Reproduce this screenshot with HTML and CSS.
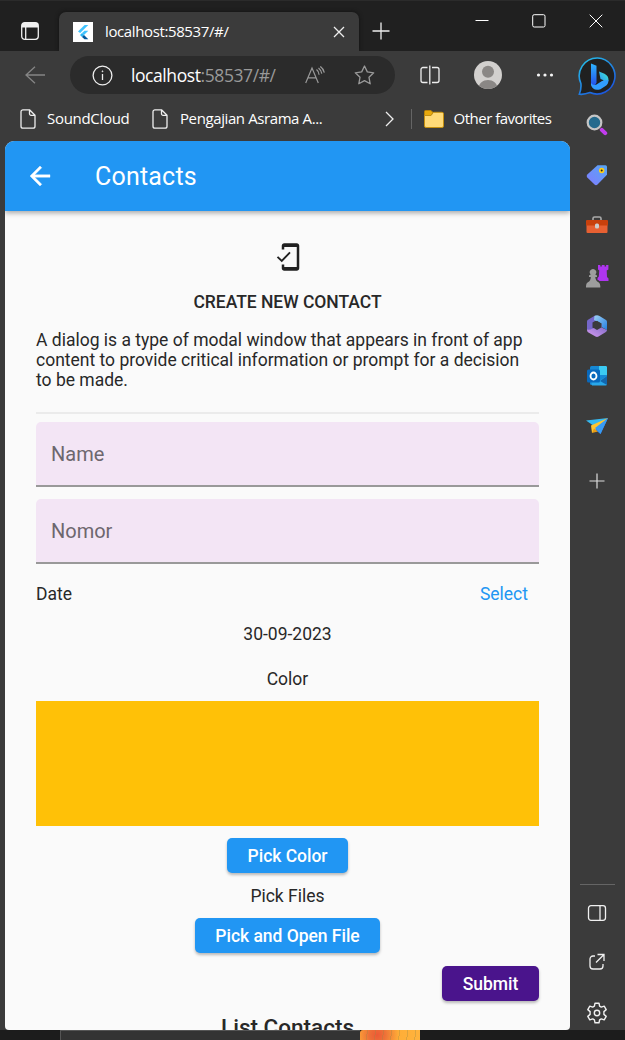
FILE: index.html
```html
<!DOCTYPE html>
<html lang="en">
<head>
<meta charset="utf-8">
<title>Contacts</title>
<link rel="stylesheet" href="styles.css">
</head>
<body>
<div class="window">
  <header class="titlebar">
    <svg class="workspaces" width="18" height="18" fill="none" stroke="#f0f0f0" stroke-width="1.3"><rect x=".7" y=".7" width="16.6" height="16.6" rx="3"/><path d="M1 2.500h16M1 4h16" stroke-width="3"/><path d="M4.700 5v12"/></svg>
    <div class="tab">
      <svg class="favicon" width="20" height="20"><path fill="#fff" d="M0 0h20v20H0z"/><path fill="#40c4ff" d="M11.600 3h3.700L7.200 11 5 9.500z"/><path fill="#40c4ff" d="M11.500 8.800h3.800L11 13l-2-2z"/><path fill="#29b6f6" d="M7 13l2-2 2.200 2L9 15z"/><path fill="#01579b" d="M9 15l2-2 4.300 4.200h-3.800z"/></svg>
      <span class="tab-title">localhost:58537/#/</span>
      <svg class="tab-close" width="12" height="12" stroke="#eee" stroke-width="1.3"><path d="M1 1l10 10M11 1L1 11"/></svg>
    </div>
    <svg class="new-tab" width="18" height="18" stroke="#eee" stroke-width="1.3"><path d="M9 .5v17M.5 9h17"/></svg>
    <div class="controls">
      <svg width="14" height="14" stroke="#fff"><path d="M.5 6.500h13"/></svg>
      <svg width="14" height="14" stroke="#fff" fill="none"><rect x=".7" y=".7" width="12.300" height="12.300" rx="1.500"/></svg>
      <svg width="14" height="14" stroke="#fff"><path d="M.7.7l12.600 12.600M13.300.7L.7 13.300"/></svg>
    </div>
  </header>
  <div class="body">
    <div class="main">
      <nav class="toolbar">
        <svg class="back" width="21" height="18" fill="none" stroke="#858585" stroke-width="1.3"><path d="M20 9H1M10 .7L1 9l9 8.300"/></svg>
        <div class="address">
          <svg width="21" height="21" fill="none" stroke="#eee" stroke-width="1.3"><circle cx="10.500" cy="10.500" r="9.400"/><path d="M10.500 9v6"/><circle cx="10.500" cy="6.300" r=".5" fill="#eee" stroke-width=".8"/></svg>
          <span class="url">localhost<span class="url-rest">:58537/#/</span></span>
          <svg class="read" width="21" height="18" fill="none" stroke="#999" stroke-width="1.2"><path d="M.7 17L7 2l6.300 15M3 11.800h8M11.500 3.500q2.500 2 2.600 5.200M13.500 2q2.700 2.200 3.300 5.600M15.300.4q3 2 4 6.200"/></svg>
          <svg class="star" width="21" height="20" fill="none" stroke="#999" stroke-width="1.3" stroke-linejoin="round"><path d="M10.500 1l2.800 5.900 6.400.9-4.700 4.500 1.200 6.500-5.700-3.200-5.700 3.200L6 12.300 1.300 7.800l6.400-.9z"/></svg>
        </div>
        <svg class="split" width="20" height="20" fill="none" stroke="#eee" stroke-width="1.3"><path d="M7.500 2.500H3a2 2 0 0 0-2 2v11a2 2 0 0 0 2 2h4.500M12 2.500h5a2 2 0 0 1 2 2v11a2 2 0 0 1-2 2h-5M9.800.5v19"/></svg>
        <svg class="avatar" width="28" height="28" viewBox="0 0 28 28"><defs><clipPath id="disc"><circle cx="14" cy="14" r="14"/></clipPath></defs><g clip-path="url(#disc)"><path fill="#d2d0ce" d="M0 0h28v28H0z"/><g fill="#8a8785"><circle cx="14" cy="10.800" r="6"/><path d="M4.500 28c0-12 19-12 19 0z"/></g></g></svg>
        <svg class="more" width="18" height="4" fill="#f5f5f5"><circle cx="2.500" cy="2" r="1.600"/><circle cx="9" cy="2" r="1.600"/><circle cx="15.500" cy="2" r="1.600"/></svg>
      </nav>
      <nav class="favorites">
        <svg class="doc" width="16" height="20" fill="none" stroke="#eee" stroke-width="1.300" stroke-linejoin="round"><path d="M9.500.8H3a2 2 0 0 0-2 2v14.400a2 2 0 0 0 2 2h10a2 2 0 0 0 2-2V6.300zM9.500.8v4a1.500 1.500 0 0 0 1.500 1.500h4"/></svg>
        <span class="fav-one">SoundCloud</span>
        <svg class="doc" width="16" height="20" fill="none" stroke="#eee" stroke-width="1.300" stroke-linejoin="round"><path d="M9.500.8H3a2 2 0 0 0-2 2v14.400a2 2 0 0 0 2 2h10a2 2 0 0 0 2-2V6.300zM9.500.8v4a1.500 1.500 0 0 0 1.500 1.500h4"/></svg>
        <span class="fav-two">Pengajian Asrama A...</span>
        <svg class="chevron" width="9" height="16" fill="none" stroke="#eee" stroke-width="1.300"><path d="M1 1l7 7-7 7"/></svg>
        <i class="fav-line"></i>
        <svg class="folder" width="20" height="18"><path fill="#e8a90c" stroke="#b98209" d="M.5 1.500q0-1 1-1h5.500l2 2-2 3H.5z"/><path fill="#ffda78" stroke="#c48f10" d="M.5 5.500H7l2.500-3.200H18q1.500 0 1.500 1.500V16q0 1.500-1.500 1.500H2Q.5 17.500.5 16z"/></svg>
        <span class="fav-other">Other favorites</span>
      </nav>
      <main class="page">
        <div class="appbar">
          <svg width="30" height="30" viewBox="0 0 24 24" fill="#fff" stroke="#fff" stroke-width=".3"><path d="M20 11H7.830l5.590-5.590L12 4l-8 8 8 8 1.410-1.410L7.830 13H20v-2z"/></svg>
          <h1>Contacts</h1>
        </div>
        <div class="form">
          <svg class="phone" width="30" height="30" viewBox="0 0 24 24" fill="#212121"><path d="M19 1H9c-1.100 0-2 .9-2 2v3h2V4h10v16H9v-2H7v3c0 1.100.9 2 2 2h10c1.100 0 2-.9 2-2V3c0-1.100-.9-2-2-2z"/><path d="M3.600 11.900L7 15.200l6.600-6.900" fill="none" stroke="#212121" stroke-width="1.500"/></svg>
          <h2>CREATE NEW CONTACT</h2>
          <p class="intro">A dialog is a type of modal window that appears in front of app<br>content to provide critical information or prompt for a decision<br>to be made.</p>
          <div class="rule"></div>
          <div class="field">Name</div>
          <div class="field">Nomor</div>
          <div class="date-row"><span>Date</span><span class="select">Select</span></div>
          <div class="date">30-09-2023</div>
          <div class="label">Color</div>
          <div class="swatch"></div>
          <button class="pick-color">Pick Color</button>
          <div class="files">Pick Files</div>
          <button class="pick-file">Pick and Open File</button>
          <button class="submit">Submit</button>
          <h3>List Contacts</h3>
        </div>
      </main>
    </div>
    <aside class="sidebar">
      <svg class="bing" width="40" height="40" viewBox="0 0 40 40"><defs><linearGradient id="ring" x1="0" y1="0" x2=".7" y2="1"><stop offset="0" stop-color="#26c6ea"/><stop offset="1" stop-color="#1c55dc"/></linearGradient><linearGradient id="bl" x2="0" y2="1"><stop stop-color="#2eb4ff"/><stop offset="1" stop-color="#2347e8"/></linearGradient><linearGradient id="br" x1="1" x2="0" y2="1"><stop stop-color="#42e8ca"/><stop offset="1" stop-color="#288cff"/></linearGradient></defs><path fill="#202020" stroke="url(#ring)" stroke-width="1.600" d="M20.500 2a18 18 0 1 1-7.500 34.600Q7 38.800 2.300 38.200Q4.500 33 3.900 27.500A18 18 0 0 1 20.500 2z"/><path fill="url(#bl)" d="M14 7.500l5.500 2.300v16.700l-2.500 5q-3-1.300-3-3.500z"/><path fill="url(#br)" d="M22 15.500l5.500 2.300q4 2 4 6.200l-1.500 4-4.500-4.200-2-.8z"/><path fill="#319dff" d="M14 27q2 3 5.500 1.500l5.500-3.500q5-1.200 6.500-1 0 4-3 6l-5 3.200Q16 35.500 14 29z"/></svg>
      <svg width="22" height="22"><circle cx="8.500" cy="8.500" r="6.800" fill="#246a8d" stroke="#c5c5c5" stroke-width="2.200"/><path d="M15.800 15.800l3.400 3.400" stroke="#c23cee" stroke-width="4" stroke-linecap="round"/></svg>
      <svg width="22" height="22"><defs><linearGradient id="tag" x1="1" x2="0" y2="1"><stop stop-color="#55a7f4"/><stop offset="1" stop-color="#817cff"/></linearGradient></defs><path fill="url(#tag)" d="M11.500 1.200h8q1.500 0 1.500 1.500v8L11.500 20.500q-1.500 1.300-3 0L1.300 13.500q-1.300-1.500 0-3z"/><circle cx="15.700" cy="6.500" r="2.700" fill="#ffcf15"/><circle cx="15.700" cy="6.500" r="1" fill="#222"/></svg>
      <svg width="24" height="22"><path fill="none" stroke="#aaa" stroke-width="1.600" d="M8 7V4.500Q8 3 9.500 3h5Q16 3 16 4.500V7"/><rect x="1.500" y="7" width="21" height="12" rx="1" fill="#e76032"/><path fill="#c8400c" d="M1 7q0-1 1-1h20q1 0 1 1v4.500H1z"/><rect x="10" y="9.500" width="4" height="5" rx="1.500" fill="#ccc"/></svg>
      <svg width="24" height="24"><path fill="#9d9d9d" d="M5.700 10.500a3.200 3.200 0 1 1 4.600 0l1.700 1v1.500h-1.700q.2 4 3.200 5.300 1.800.9 1.800 3.700v1.500H1V22q0-2.800 1.800-3.700 3-1.300 3-5.300H4v-1.500z"/><path fill="#ae35ef" d="M13 1h2.300v1.500h1.500V1h2.800v1.500h1.500V1H23.400v4.500l-1.700 1 .3 6.500 1.500 1.500V17H14.500q-.8-.8-2-1.300V14l1.300-1.500.5-6L13 5.500z"/></svg>
      <svg width="22" height="24"><defs><linearGradient id="m1" x2="1" y2="1"><stop stop-color="#a1d2f3"/><stop offset="1" stop-color="#227ee2"/></linearGradient><linearGradient id="m2" y1="1" x2="1" y2="0"><stop stop-color="#d69af0"/><stop offset="1" stop-color="#7968c5"/></linearGradient></defs><path fill="#7567c9" d="M9.500 1.300L2 5.700Q1 6.400 1 7.500v9l7.500-1.800-2-1V8.500L10 6.500z"/><path fill="url(#m1)" d="M8.500 2q2.500-1.500 5 0L20 6q1 .6 1 2v8l-5.500-3V9.500L8 6z"/><path fill="url(#m2)" d="M1 15.500q3 .5 6-1l8.500-4.500v3.500l5.500 2.500q0 1.500-1.500 2.300L12.500 22.600q-1.500.8-3 0L2 18.300Q1 17.500 1 15.500z"/><path fill="#3b3b3b" d="M8 8.500l3-1.700 4.300 2.600v4L11 16l-4-2.400z"/></svg>
      <svg width="22" height="22"><rect x="4" y="1" width="17" height="19" rx="1.500" fill="#1688d4"/><path fill="#3bcaf2" d="M13 1h7l1 1v8h-8z"/><path fill="#28a8ea" d="M4 11l9 5 8-5v8q0 1.500-1.500 1.500H6z"/><path fill="#1266ad" d="M14 16l7-5v9z"/><rect x="1" y="4.500" width="13" height="13" rx="1.500" fill="#0869bd"/><ellipse cx="7.500" cy="11" rx="3" ry="3.500" fill="none" stroke="#fff" stroke-width="1.800"/></svg>
      <svg width="22" height="18"><path fill="#35b9f1" d="M0 3.500L22 1 8 9z"/><path fill="#2979e8" d="M22 1L14.500 17 8 12z"/><path fill="#ffc52e" d="M22 1L5 8.500 6 16z"/><path fill="#e79c16" d="M6 16l2-4.500 4 3z"/><path fill="#389af3" d="M22 1l-7.500 16L9 11z"/></svg>
      <svg width="16" height="16" stroke="#ddd" stroke-width="1.200"><path d="M8 .5v15M.5 8h15"/></svg>
      <div class="side-bottom">
        <svg width="20" height="16" fill="none" stroke="#f0f0f0" stroke-width="1.300"><rect x="1.500" y=".7" width="17" height="14.600" rx="2.500"/><path d="M13 1v14"/></svg>
        <svg width="18" height="18" fill="none" stroke="#f0f0f0" stroke-width="1.300"><path d="M7 3H5a3 3 0 0 0-3 3v7a3 3 0 0 0 3 3h7a3 3 0 0 0 3-3v-2M9.500 1.500H16V8M16 1.500L8 9.500"/></svg>
        <svg width="22" height="22" viewBox="0 0 22 22" fill="none" stroke="#f0f0f0" stroke-width="1.400" stroke-linejoin="round"><path d="M9 1.200h4l.6 2.900 1.700 1 2.900-1 2 3.500-2.300 2v2.800l2.300 2-2 3.500-2.900-1-1.700 1-.6 2.900H9l-.6-2.900-1.700-1-2.900 1-2-3.500 2.300-2V9.600l-2.300-2 2-3.500 2.900 1 1.700-1z"/><circle cx="11" cy="11" r="2.700"/></svg>
      </div>
    </aside>
  </div>
  <footer class="under"><div class="under-window"></div><div class="under-art"></div></footer>
</div>
</body>
</html>
```
FILE: styles.css
```css
* { box-sizing: border-box; }
body { margin: 0; background: #3b3b3b; }
svg { display: block; flex: none; }
h1, h2, h3, p { margin: 0; }

.window { width: 625px; height: 1040px; display: flex; flex-direction: column; overflow: hidden; font-family: "Open Sans", sans-serif; color: #fff; }
.titlebar { height: 51px; flex: none; display: flex; background: #202020; border-top: 1px solid #2b2b2b; }
.workspaces { margin: 21px 20px 0 21px; }
.tab { width: 300px; height: 39px; margin-top: 11px; padding-left: 14px; border-radius: 7px 7px 0 0; background: #3b3b3b; display: flex; align-items: center; box-shadow: 0 0 4px #111; }
.tab-title { width: 228px; margin-left: 12px; padding-bottom: 2px; font-size: 15px; letter-spacing: -.38px; }
.new-tab { margin: 21px 0 0 12.500px; }
.controls { display: flex; gap: 43px; margin: 13px 0 0 85px; }

.body { height: 979px; display: flex; background: #3b3b3b; }
.main { width: 570px; display: flex; flex-direction: column; }
.toolbar { height: 48px; flex: none; display: flex; align-items: center; padding-left: 25px; }
.address { width: 325px; height: 38px; margin-left: 24px; padding-left: 22px; border-radius: 19px; background: #2b2b2b; display: flex; align-items: center; }
.url { width: 174px; margin-left: 18px; padding-bottom: 1px; font-size: 17.500px; letter-spacing: -.42px; white-space: nowrap; }
.url-rest { color: #999; }
.star { margin-left: 27.500px; }
.split { margin-left: 24.500px; }
.avatar { margin-left: 34.500px; }
.more { margin-left: 34px; }
.favorites { height: 42px; flex: none; display: flex; align-items: center; padding: 0 0 2px 20px; font-size: 15px; white-space: nowrap; letter-spacing: -.4px; }
.fav-one, .fav-two, .fav-other { padding-bottom: 2px; }
.fav-one { width: 105px; margin-left: 11px; letter-spacing: -.3px; }
.fav-two { width: 194px; margin-left: 12px; }
.chevron { margin-left: 10.500px; margin-right: 17px; }
.fav-line { width: 1px; height: 20px; margin-right: 12px; background: #656565; }
.fav-other { margin-left: 10px; letter-spacing: -.5px; }

.page { width: 565px; height: 889px; margin-left: 5px; overflow: hidden; border-radius: 9px 9px 4px 4px; background: #fafafa; color: #282828; font-family: Roboto, sans-serif; font-size: 17.500px; }
.appbar { height: 70px; padding-left: 20px; display: flex; align-items: center; gap: 40px; background: #2196f3; color: #fff; box-shadow: 0 2px 5px #0005; }
h1 { font-size: 25px; font-weight: 400; letter-spacing: .2px; }
.form { padding: 31px 31px 0; display: flex; flex-direction: column; align-items: center; }
h2 { margin-top: 20px; font-size: 17.500px; line-height: 20px; font-weight: 500; letter-spacing: -.03px; }
.intro { width: 100%; margin-top: 18px; line-height: 20px; white-space: nowrap; }
.rule { width: 100%; height: 2px; margin: 22px 0 8px; background: #ebebeb; }
.field { width: 100%; height: 65px; margin-bottom: 12px; padding: 0 15px 2px; border-bottom: 2px solid #999; border-radius: 5px 5px 0 0; background: #f3e5f5; color: #6d676e; font-size: 20px; line-height: 64px; }
.date-row { width: 100%; margin-top: 8px; padding-right: 11px; display: flex; justify-content: space-between; line-height: 20px; }
.select { color: #2196f3; }
.date { margin-top: 20px; line-height: 20px; }
.label { margin-top: 25px; line-height: 20px; }
.swatch { width: 100%; height: 125px; margin: 11.500px 0 12.500px; background: #ffc107; }
button { height: 35px; flex: none; border: 0; padding: 0; border-radius: 5px; background: #2196f3; color: #fff; font: 500 17.500px Roboto, sans-serif; letter-spacing: -.03px; box-shadow: 0 2px 3px #0004; }
.pick-color { width: 121px; }
.files { margin: 13px 0 12px; line-height: 20px; }
.pick-file { width: 185px; }
.submit { width: 97px; margin-top: 13px; align-self: flex-end; background: #4a148c; }
h3 { margin-top: 13px; font-size: 22.500px; line-height: 26px; font-weight: 500; }

.sidebar { width: 55px; padding-right: 1px; display: grid; grid-template-rows: 49px repeat(7, 50.200px) 60px 1fr; place-items: center; }
.side-bottom { width: 35px; height: 146px; align-self: end; padding: 20px 0 6px; border-top: 1px solid #656565; display: flex; flex-direction: column; align-items: center; justify-content: space-between; }
.under { height: 10px; display: flex; padding-left: 60px; background: #1c1c1c; }
.under-window { width: 300px; border: solid #555; border-width: 1px 0 0 1px; background: #333; }
.under-art { width: 60px; border-radius: 3px 0 0; background: repeating-linear-gradient(98deg, transparent 0 7px, #9845 7px 8px), radial-gradient(circle at 17px 5px, #ed5936, #ed7038 8px, #ffae37 22px, #ffb33d); }
```
